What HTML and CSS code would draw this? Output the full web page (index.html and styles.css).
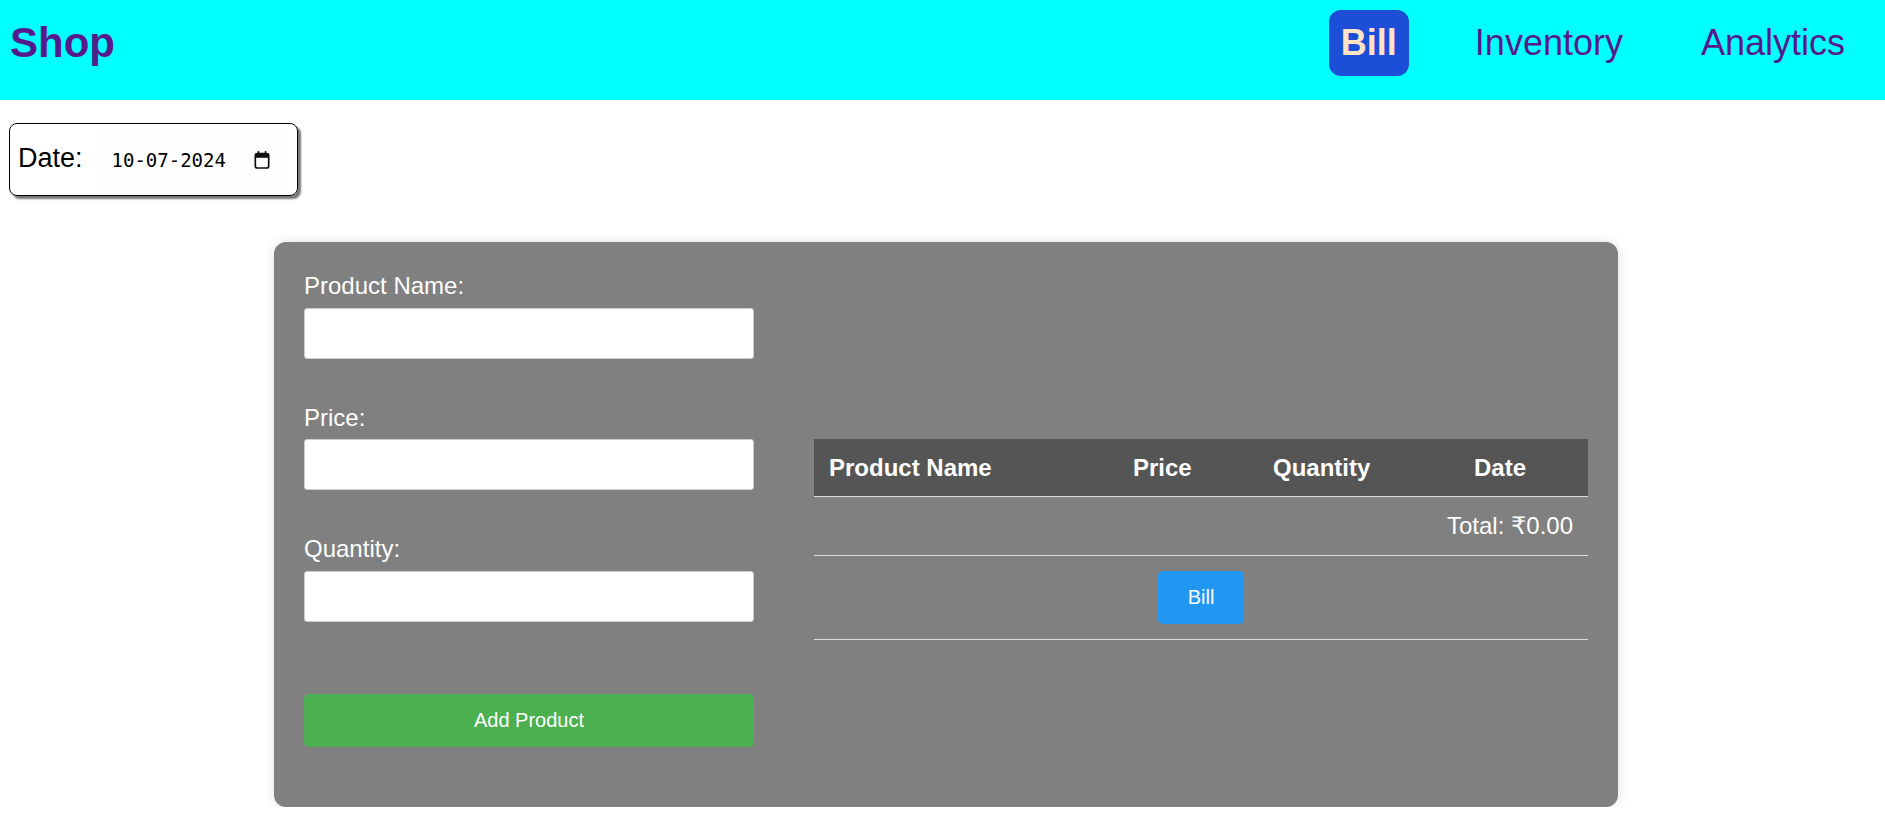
FILE: index.html
```html
<!DOCTYPE html>
<html lang="en">
<head>
<meta charset="utf-8">
<title>Shop</title>
<link rel="stylesheet" href="styles.css">
</head>
<body>
<header class="topbar">
  <a class="brand" href="#">Shop</a>
  <nav class="nav">
    <a class="nav-link active" href="#">Bill</a>
    <a class="nav-link" href="#">Inventory</a>
    <a class="nav-link" href="#">Analytics</a>
  </nav>
</header>

<div class="date-box">
  <span class="date-label">Date:</span>
  <div class="date-input">
    <span class="date-value">10-07-2024</span>
    <svg class="cal-icon" width="16" height="18" viewBox="0 0 16 18" aria-hidden="true">
      <path d="M4.5 0.8v2.6M11.5 0.8v2.6" stroke="#111" stroke-width="1.7" stroke-linecap="round"/>
      <rect x="1.3" y="2.6" width="13.4" height="14.4" rx="2" fill="none" stroke="#111" stroke-width="1.7"/>
      <rect x="1.3" y="2.6" width="13.4" height="4.2" fill="#111"/>
    </svg>
  </div>
</div>

<main class="card">
  <form class="product-form">
    <label class="field-label">Product Name:</label>
    <input class="field-input" type="text">
    <label class="field-label">Price:</label>
    <input class="field-input" type="text">
    <label class="field-label">Quantity:</label>
    <input class="field-input" type="text">
    <button class="add-btn" type="button">Add Product</button>
  </form>

  <section class="bill-panel">
    <table class="bill-table">
      <colgroup>
        <col class="col-name">
        <col class="col-price">
        <col class="col-qty">
        <col class="col-date">
      </colgroup>
      <thead>
        <tr><th>Product Name</th><th>Price</th><th>Quantity</th><th>Date</th></tr>
      </thead>
      <tbody>
        <tr><td colspan="4" class="total-cell">Total: ₹0.00</td></tr>
        <tr><td colspan="4" class="action-cell"><button class="bill-btn" type="button">Bill</button></td></tr>
      </tbody>
    </table>
  </section>
</main>
</body>
</html>
```

FILE: styles.css
```css
* {
  box-sizing: border-box;
}

body {
  margin: 0;
  font-family: "Liberation Sans", Arial, "DejaVu Sans", sans-serif;
  color: #000;
  background: #fff;
}

.topbar {
  height: 100px;
  background: #00ffff;
  display: flex;
  align-items: center;
  justify-content: space-between;
  padding: 0 28px 14px 10px;
}

.brand {
  font-size: 42px;
  font-weight: bold;
  color: #551a8b;
  text-decoration: none;
}

.nav {
  display: flex;
  align-items: center;
  gap: 54px;
}

.nav-link {
  font-size: 36px;
  color: #551a8b;
  text-decoration: none;
  padding: 12px;
  border-radius: 12px;
  line-height: 42px;
}

.nav-link.active {
  background: #1d4ed8;
  color: #ffe4c4;
  font-weight: bold;
}

.date-box {
  display: inline-flex;
  align-items: center;
  margin: 23px 0 0 9px;
  height: 73px;
  width: 289px;
  padding: 0 7px 0 8px;
  border: 1px solid #000;
  border-radius: 8px;
  box-shadow: 3px 3px 2px #777;
}

.date-label {
  font-size: 27px;
  padding-bottom: 3px;
}

.date-input {
  display: flex;
  align-items: center;
  margin-left: 15px;
  height: 58px;
  padding: 0 19px 0 14px;
  background: #fefefe;
}

.date-value {
  font-family: "DejaVu Sans Mono", "Liberation Mono", monospace;
  font-size: 19px;
  color: #000;
}

.cal-icon {
  margin-left: 28px;
  display: block;
}

.card {
  display: flex;
  align-items: flex-start;
  gap: 60px;
  width: 1344px;
  margin: 46px 0 0 274px;
  padding: 30px;
  background: #808080;
  border-radius: 12px;
  box-shadow: 0 0 12px rgba(0, 0, 0, 0.12);
}

.product-form {
  width: 450px;
  flex: none;
  display: flex;
  flex-direction: column;
}

.field-label {
  display: block;
  font-size: 24px;
  line-height: 27.6px;
  color: #fff;
}

.field-input {
  display: block;
  width: 100%;
  height: 51px;
  margin: 8px 0 45px;
  border: 1px solid #ccc;
  border-radius: 3px;
  background: #fff;
  font-size: 20px;
  padding: 0 10px;
}

.field-input:last-of-type {
  margin-bottom: 72px;
}

.add-btn {
  display: block;
  width: 100%;
  height: 53px;
  margin-bottom: 30px;
  border: none;
  border-radius: 5px;
  background: #4caf50;
  color: #fff;
  font-family: inherit;
  font-size: 20px;
}

.bill-panel {
  flex: 1;
  margin-top: 167px;
}

.bill-table {
  width: 100%;
  border-collapse: collapse;
  table-layout: fixed;
  color: #fff;
  font-size: 24px;
}

.col-name { width: 304px; }
.col-price { width: 140px; }
.col-qty { width: 201px; }
.col-date { width: 129px; }

.bill-table th {
  background: #555555;
  font-weight: bold;
  text-align: left;
  padding: 15px;
  line-height: 27px;
  border-bottom: 1px solid #ddd;
}

.bill-table td {
  padding: 15px;
  line-height: 28px;
  border-bottom: 1px solid #ddd;
}

.total-cell {
  text-align: right;
}

.action-cell {
  text-align: center;
}

.bill-btn {
  display: inline-block;
  vertical-align: top;
  padding: 15px 30px;
  height: 53px;
  border: none;
  border-radius: 5px;
  background: #2196f3;
  color: #fff;
  font-family: inherit;
  font-size: 20px;
  line-height: 23px;
}
```
